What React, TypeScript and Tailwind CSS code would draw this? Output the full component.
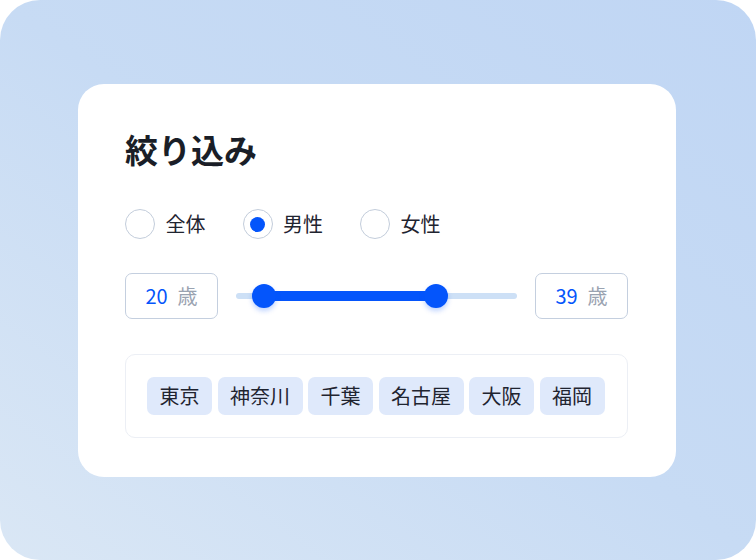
import { useState } from 'react';

const GENDERS = ['全体', '男性', '女性'] as const;
const CITIES = ['東京', '神奈川', '千葉', '名古屋', '大阪', '福岡'];

function AgeBox({ value }: { value: number }) {
    return (
        <div className="w-[93px] h-[46px] shrink-0 flex items-center justify-center gap-[10px] border border-[#c4cfdf] rounded-[7px] text-[20px] leading-none">
            <span className="text-[#0455fb]">{value}</span>
            <span className="text-[#9aa3b1]">歳</span>
        </div>
    );
}

export default function App() {
    const [gender, setGender] = useState<typeof GENDERS[number]>('男性');

    return (
        <div className="w-[756px] h-[560px] bg-white" style={{ fontFamily: '"Noto Sans CJK JP", "Noto Sans", sans-serif' }}>
            <div className="w-full h-full rounded-[40px] bg-linear-to-tr from-[#dae7f5] via-[#c7dbf4] to-[#c0d6f4] flex items-center pl-[78px]">
                <div className="w-[598px] h-[393px] bg-white rounded-[26px] pl-[47px] pr-[48px] pt-[46px] mt-[1px]">
                    <h1 className="text-[33px] leading-[38px] font-bold text-[#1a1e27]">絞り込み</h1>

                    <div className="flex items-center gap-[37px] mt-[41px]">
                        {GENDERS.map((g) => (
                            <button key={g} className="flex items-center gap-[10.5px]" onClick={() => setGender(g)}>
                                <span className="w-[30px] h-[30px] rounded-full border-[1.5px] border-[#c3cddb] flex items-center justify-center">
                                    {gender === g && <span className="w-[15px] h-[15px] rounded-full bg-[#0455fb]" />}
                                </span>
                                <span className="text-[20px] leading-none text-[#1f2430]">{g}</span>
                            </button>
                        ))}
                    </div>

                    <div className="flex items-center mt-[34px]">
                        <AgeBox value={20} />
                        <div className="relative flex-1 mx-[18px] h-[46px]">
                            <div className="absolute left-0 right-0 top-[20px] h-[6px] rounded-full bg-[#cde0f6]" />
                            <div className="absolute left-[28px] w-[172px] top-[18px] h-[10px] bg-[#0455fb]" />
                            <div className="absolute left-[16px] top-[11px] w-[24px] h-[24px] rounded-full bg-[#0455fb] shadow-[0_3px_5px_rgba(4,85,251,0.25)]" />
                            <div className="absolute left-[188px] top-[11px] w-[24px] h-[24px] rounded-full bg-[#0455fb] shadow-[0_3px_5px_rgba(4,85,251,0.25)]" />
                        </div>
                        <AgeBox value={39} />
                    </div>

                    <div className="mt-[35px] border border-[#eceff5] rounded-[10px] px-[21px] py-[22px] flex gap-[5.5px]">
                        {CITIES.map((c) => (
                            <span key={c} className="h-[38px] flex items-center px-[12.5px] rounded-[7px] bg-[#dfe9fb] text-[20px] leading-none text-[#1f2430]">
                                {c}
                            </span>
                        ))}
                    </div>
                </div>
            </div>
        </div>
    );
}
